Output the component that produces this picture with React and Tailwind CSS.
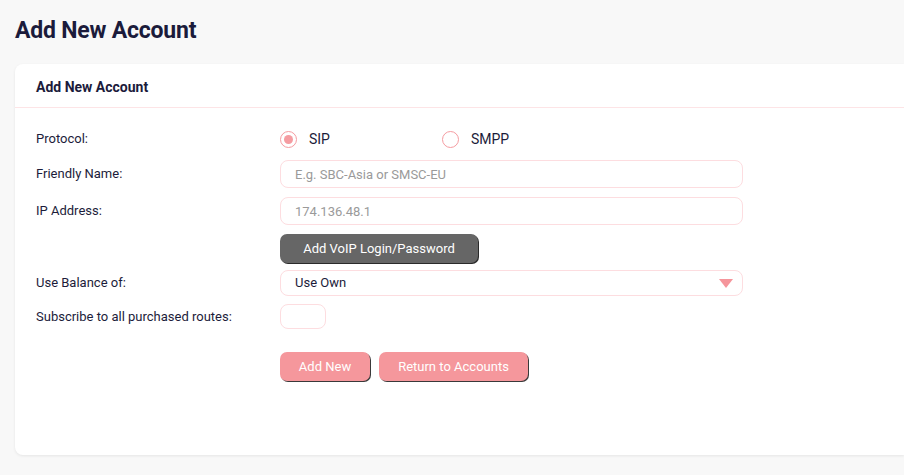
import React, { useState } from 'react';

const labelCls = 'w-[244px] shrink-0 text-[13px] text-[#1c1c3a]';
const inputCls =
  'w-[463px] h-[28px] rounded-[8px] border border-[#fddde0] px-[14px] text-[13px] text-[#1c1c3a] placeholder:text-[#9a9a9a] outline-none bg-white';

function Radio({ checked, label, onClick }) {
  return (
    <button type="button" onClick={onClick} className="flex items-center gap-[12px]">
      <span className="w-[17px] h-[17px] rounded-full border border-[#f59ca1] flex items-center justify-center bg-white">
        {checked && <span className="w-[9px] h-[9px] rounded-full bg-[#f59ca1]" />}
      </span>
      <span className="text-[14px] text-[#1c1c3a]">{label}</span>
    </button>
  );
}

export default function App() {
  const [protocol, setProtocol] = useState('SIP');

  return (
    <div className="min-h-[475px] bg-[#f8f8f8] pl-[15px] pt-[17px] pb-[20px] font-['Roboto',sans-serif] overflow-hidden">
      <h1 className="text-[23px] font-bold text-[#1b1b3b] leading-[28px] tracking-[-0.2px]">Add New Account</h1>

      <div className="mt-[19px] bg-white rounded-l-[8px] shadow-[0_1px_3px_rgba(0,0,0,0.08)] h-[391px]">
        {/* Header */}
        <div className="h-[44px] flex items-center pt-[3px] px-[21px] border-b border-[#fde4e6]">
          <h2 className="text-[14px] font-bold text-[#1b1b3b]">Add New Account</h2>
        </div>

        {/* Form */}
        <div className="px-[21px] pt-[21px] flex flex-col">
          <div className="flex items-center h-[20px]">
            <span className={labelCls}>Protocol:</span>
            <div className="flex items-center">
              <div className="w-[162px]">
                <Radio checked={protocol === 'SIP'} label="SIP" onClick={() => setProtocol('SIP')} />
              </div>
              <Radio checked={protocol === 'SMPP'} label="SMPP" onClick={() => setProtocol('SMPP')} />
            </div>
          </div>

          <div className="flex items-center mt-[11px]">
            <span className={labelCls}>Friendly Name:</span>
            <input className={inputCls} placeholder="E.g. SBC-Asia or SMSC-EU" />
          </div>

          <div className="flex items-center mt-[9px]">
            <span className={labelCls}>IP Address:</span>
            <input className={inputCls} placeholder="174.136.48.1" />
          </div>

          <div className="flex items-center mt-[9px]">
            <span className={labelCls} />
            <button className="h-[29px] w-[198px] rounded-[7px] bg-[#666666] text-white text-[13px] shadow-[1px_1px_0_#2a2a2a]">
              Add VoIP Login/Password
            </button>
          </div>

          <div className="flex items-center mt-[7px]">
            <span className={labelCls}>Use Balance of:</span>
            <div className="relative w-[463px] h-[26px] rounded-[8px] border border-[#fddde0] flex items-center px-[14px] text-[13px] text-[#1c1c3a]">
              Use Own
              <svg className="absolute right-[9px] top-[8px]" width="14" height="9" viewBox="0 0 14 9">
                <path d="M0 0h14L7 9z" fill="#f5959b" />
              </svg>
            </div>
          </div>

          <div className="flex items-center mt-[8px]">
            <span className={labelCls}>Subscribe to all purchased routes:</span>
            <div className="w-[46px] h-[25px] rounded-[8px] border border-[#fddde0]" />
          </div>

          <div className="flex items-center mt-[23px]">
            <span className={labelCls} />
            <div className="flex gap-[9px]">
              <button className="h-[29px] w-[90px] rounded-[7px] bg-[#f5979c] text-white text-[13px] shadow-[1px_1px_0_#3a3a3a]">
                Add New
              </button>
              <button className="h-[29px] w-[149px] rounded-[7px] bg-[#f5979c] text-white text-[13px] shadow-[1px_1px_0_#3a3a3a]">
                Return to Accounts
              </button>
            </div>
          </div>
        </div>
      </div>
    </div>
  );
}
